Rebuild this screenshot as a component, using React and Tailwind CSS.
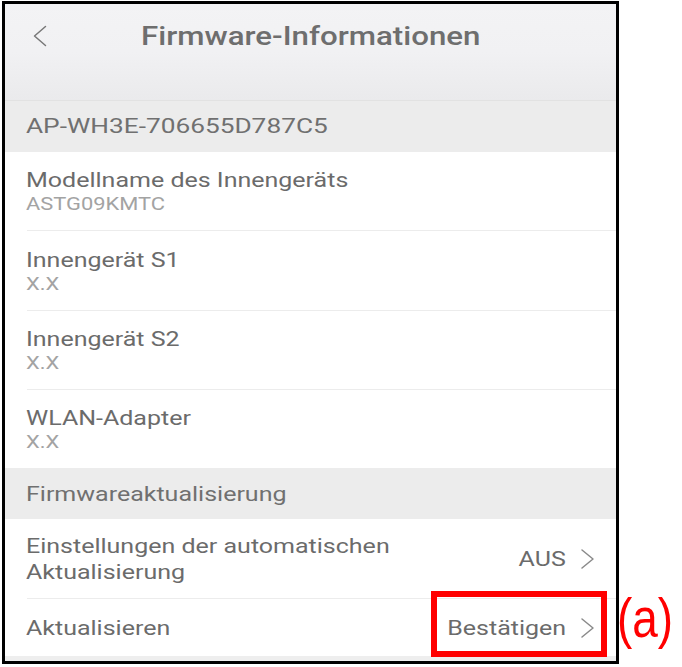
import React from "react";

const font = { fontFamily: "Roboto, 'Noto Sans', sans-serif" };

function T({ children, className = "", right = false }) {
  return (
    <span
      className={`inline-block whitespace-nowrap scale-x-[1.25] ${right ? "origin-right" : "origin-left"} ${className}`}
    >
      {children}
    </span>
  );
}

function Chevron() {
  return (
    <svg width="15" height="22" viewBox="0 0 15 22" fill="none">
      <path d="M2 2 L13 11 L2 20" stroke="#8a8a8a" strokeWidth="1.5" strokeLinecap="round" strokeLinejoin="round" />
    </svg>
  );
}

function InfoRow({ title, sub, h, divider = true }) {
  return (
    <div className={`flex flex-col pl-[21px] bg-white ${h}`}>
      <div className="flex flex-col flex-1 justify-center gap-[2px]">
        <div className="text-[20px] leading-[24px] text-[#6b6b6b]">
          <T>{title}</T>
        </div>
        <div className="text-[17.5px] leading-[20px] text-[#a3a3a3]">
          <T>{sub}</T>
        </div>
      </div>
      {divider && <div className="ml-px h-px bg-[#ececec]" />}
    </div>
  );
}

export default function App() {
  return (
    <div className="relative w-[682px] h-[667px] bg-white overflow-hidden" style={font}>
      <div className="ml-[2px] mt-[1px] w-[617px] h-[663px] border-[3px] border-black flex flex-col bg-white">
        {/* header */}
        <div className="h-[96px] bg-gradient-to-b from-[#f3f3f5] via-[#f1f1f3] to-[#eaeaec] flex items-start">
          <div className="w-[80px] pl-[28px] pt-[21px]">
            <svg width="14" height="22" viewBox="0 0 14 22" fill="none">
              <path d="M12.5 1.5 L1.5 11 L12.5 20.5" stroke="#777" strokeWidth="1.5" strokeLinecap="round" strokeLinejoin="round" />
            </svg>
          </div>
          <div className="flex-1 flex justify-center pt-[18px] text-[25px] leading-[30px] font-medium text-[#6e6e6e]">
            <span className="inline-block whitespace-nowrap scale-x-[1.25] origin-center">Firmware-Informationen</span>
          </div>
          <div className="w-[80px]" />
        </div>
        <div className="h-px bg-[#e2e2e2]" />
        {/* section header */}
        <div className="h-[51px] bg-[#ececec] flex items-center pl-[21px] text-[21px] text-[#707070]">
          <T>AP-WH3E-706655D787C5</T>
        </div>
        <InfoRow title="Modellname des Innengeräts" sub="ASTG09KMTC" h="h-[79px]" />
        <InfoRow title="Innengerät S1" sub="X.X" h="h-[80px]" />
        <InfoRow title="Innengerät S2" sub="X.X" h="h-[79px]" />
        <InfoRow title="WLAN-Adapter" sub="X.X" h="h-[78px]" divider={false} />
        <div className="h-[51px] bg-[#ececec] flex items-center pl-[21px] text-[20px] text-[#707070]">
          <T>Firmwareaktualisierung</T>
        </div>
        <div className="h-[80px] pl-[21px] bg-white flex flex-col">
          <div className="flex-1 flex items-center pr-[21px]">
            <div className="flex-1 text-[20px] leading-[26px] text-[#6b6b6b]">
              <T>Einstellungen der automatischen</T>
              <br />
              <T>Aktualisierung</T>
            </div>
            <div className="text-[20px] text-[#6b6b6b] mr-[14px]">
              <T right>AUS</T>
            </div>
            <Chevron />
          </div>
          <div className="ml-px h-px bg-[#ececec]" />
        </div>
        <div className="h-[57px] pl-[21px] pr-[21px] bg-white flex items-center">
          <div className="flex-1 text-[20px] text-[#6b6b6b]">
            <T>Aktualisieren</T>
          </div>
          <div className="text-[20px] text-[#6b6b6b] mr-[14px]">
            <T right>Bestätigen</T>
          </div>
          <Chevron />
        </div>
        <div className="flex-1 bg-[#eeeeee]" />
      </div>
      {/* annotation */}
      <div className="absolute left-[431px] top-[591px] w-[176px] h-[66px] border-[6px] border-[#ff0000]" />
      <div
        className="absolute left-[617px] top-[590px] text-[56px] leading-[56px] text-[#ff0000]"
        style={{ fontFamily: "'Liberation Sans', Arial, sans-serif" }}
      >
        <span className="inline-block whitespace-nowrap scale-x-[0.82] origin-left">(a)</span>
      </div>
    </div>
  );
}
